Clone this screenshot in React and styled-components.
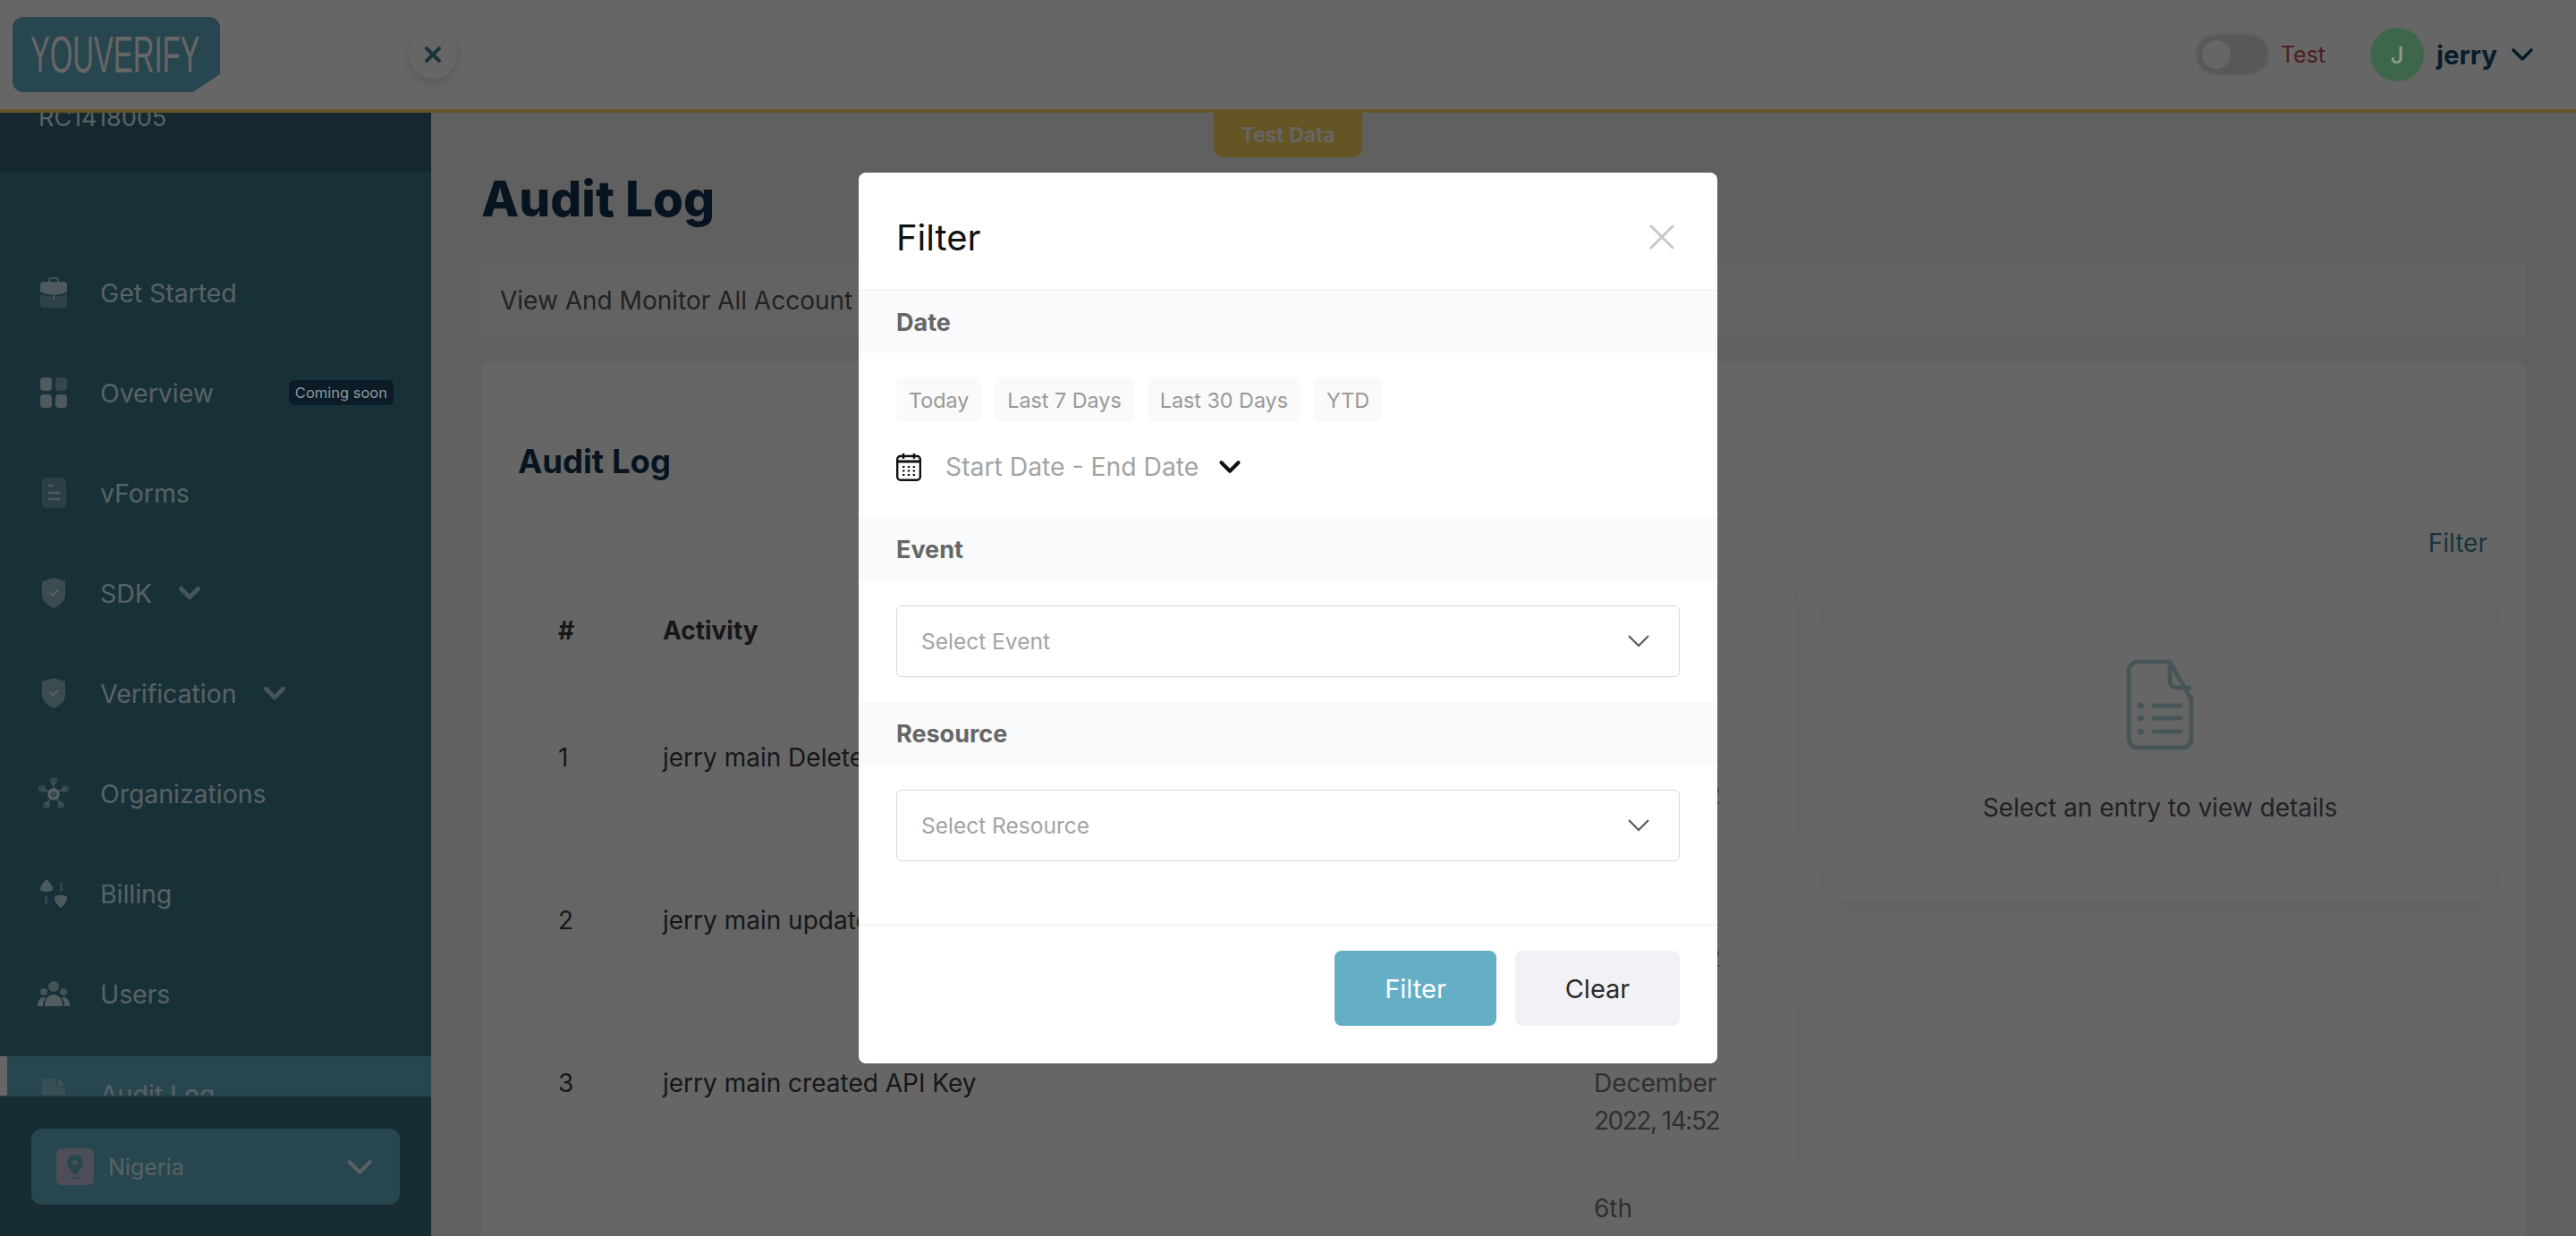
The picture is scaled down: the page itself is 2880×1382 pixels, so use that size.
import React from 'react';
import styled, { createGlobalStyle } from 'styled-components';
import { X, ChevronDown } from 'lucide-react';

const font = `Inter, "Liberation Sans", sans-serif`;

const GlobalStyle = createGlobalStyle`
  html, body { margin: 0; padding: 0; height: 100%; overflow: hidden; background: #f0f0f0; }
  body { font-family: ${font}; }
  * { box-sizing: border-box; }
`;

const Page = styled.div`
  position: relative;
  width: 2880px;
  height: 1382px;
  overflow: hidden;
  display: flex;
  flex-direction: column;
`;

/* top bar */
const TopBar = styled.header`
  position: relative;
  flex: none;
  height: 126px;
  display: flex;
  align-items: center;
  padding: 0 40px 0 14px;
  background: #fff;
  border-bottom: 4px solid #fdd45e;
`;
const Logo = styled.div`
  width: 232px;
  height: 84px;
  padding-left: 20px;
  display: flex;
  align-items: center;
  background: #65afc6;
  border-radius: 12px;
  clip-path: polygon(0 0, 100% 0, 100% 76%, 87% 100%, 0 100%);
  overflow: hidden;
`;
const LogoText = styled.span`
  display: inline-block;
  color: #fff;
  font-family: "Liberation Sans", sans-serif;
  font-size: 58px;
  line-height: 1;
  white-space: nowrap;
  transform: scaleX(0.565);
  transform-origin: left center;
`;
const SideToggle = styled.button`
  width: 54px;
  height: 54px;
  margin-left: 211px;
  border: 0;
  border-radius: 50%;
  padding: 0;
  display: flex;
  align-items: center;
  justify-content: center;
  background: #fff;
  color: #3f7f8f;
  box-shadow: 0 4px 12px rgba(0, 0, 0, 0.14);
`;
const TestTab = styled.div`
  position: absolute;
  left: 1357px;
  top: 126px;
  width: 166px;
  height: 50px;
  display: flex;
  align-items: center;
  justify-content: center;
  border-radius: 0 0 10px 10px;
  background: #fdd45e;
  color: #fff;
  font-size: 23px;
  font-weight: 600;
`;
const TopRight = styled.div`
  margin-left: auto;
  display: flex;
  align-items: center;
`;
const Switch = styled.div`
  width: 84px;
  height: 48px;
  padding: 5px;
  border: 3px solid #ededed;
  border-radius: 24px;
  background: #dcdcdc;
`;
const Knob = styled.div`
  width: 32px;
  height: 32px;
  border-radius: 50%;
  background: #fff;
`;
const TestLabel = styled.span`
  margin: 0 50px 0 12px;
  color: #c74a4a;
  font-size: 25px;
`;
const Avatar = styled.div`
  width: 60px;
  height: 60px;
  margin-right: 14px;
  border-radius: 50%;
  display: flex;
  align-items: center;
  justify-content: center;
  background: #9bffb8;
  font-size: 26px;
  font-weight: 500;
`;
/* this letter is brighter than the dimming layer lets anything be */
const AvatarLetter = styled.span`
  position: relative;
  z-index: 20;
  color: #8f9a90;
`;
const UserName = styled.span`
  margin-right: 8px;
  color: #18486b;
  font-size: 29.5px;
  font-weight: 700;
`;

/* sidebar */
const Body = styled.div`
  flex: 1;
  min-height: 0;
  display: flex;
`;
const Sidebar = styled.aside`
  flex: none;
  width: 482px;
  display: flex;
  flex-direction: column;
  background: #3d7a8c;
  color: #dcf5fa;
`;
const SideScroll = styled.div`
  flex: 1;
  min-height: 0;
  overflow: hidden;
`;
const OrgHead = styled.div`
  height: 67px;
  overflow: hidden;
  background: #376575;
`;
const OrgNumber = styled.div`
  margin: -11px 0 0 43px;
  font-size: 27px;
  line-height: 34px;
`;
const Nav = styled.nav`
  padding-top: 92px;
  display: flex;
  flex-direction: column;
  gap: 28px;
`;
const NavItem = styled.div`
  flex: none;
  position: relative;
  height: 84px;
  padding-left: 112px;
  display: flex;
  align-items: center;
  font-size: 28.4px;
  background: ${(p) => (p.$active ? '#65afc6' : 'transparent')};
  border-left: ${(p) => (p.$active ? '8px solid #fff' : '0')};
  ${(p) => p.$active && 'padding-left: 104px;'}
`;
const NavIcon = styled.span`
  position: absolute;
  left: ${(p) => (p.$active ? '34px' : '42px')};
  top: 24px;
  width: 36px;
  height: 36px;
  display: flex;
  align-items: center;
  justify-content: center;
`;
const NavChevron = styled(ChevronDown)`
  margin-left: 23px;
  opacity: 0.75;
`;
const SoonBadge = styled.span`
  position: relative;
  z-index: 20;
  margin-left: auto;
  margin-right: 42px;
  height: 28px;
  padding: 0 7px;
  display: flex;
  align-items: center;
  border-radius: 6px;
  background: #0b1c28;
  color: #8d979c;
  font-size: 16.5px;
`;
const SideFooter = styled.div`
  flex: none;
  height: 157px;
  padding: 35px 35px 0;
  border-top: 2px solid #5d8696;
  background: #3a7080;
`;
const CountrySelect = styled.div`
  height: 85px;
  padding: 0 22px 0 28px;
  display: flex;
  align-items: center;
  border-radius: 12px;
  background: #65afc6;
`;
const CountryIcon = styled.span`
  width: 42px;
  height: 41px;
  margin-right: 16px;
  display: flex;
  align-items: center;
  justify-content: center;
  border-radius: 6px;
  background: #c3c3e0;
`;
const CountryName = styled.span`
  font-size: 25px;
`;
const CountryChevron = styled(ChevronDown)`
  margin-left: auto;
`;

/* main content */
const Main = styled.main`
  flex: 1;
  min-width: 0;
  padding: 61px 56px 0;
  overflow: hidden;
  background: #f0f0f0;
`;
const PageTitle = styled.h1`
  margin: 0;
  color: #12334f;
  font-size: 55px;
  line-height: 70px;
  font-weight: 800;
`;
const SubCard = styled.div`
  height: 83px;
  margin-top: 37px;
  padding-left: 21px;
  display: flex;
  align-items: center;
  border-radius: 8px;
  background: #f8f8f8;
  color: #555;
  font-size: 28px;
`;
const Card = styled.section`
  margin-top: 29px;
  padding: 85px 43px 0 41px;
  min-height: 1000px;
  border-radius: 8px;
  background: #fff;
`;
const CardTitle = styled.h2`
  margin: 0;
  color: #12334f;
  font-size: 36.5px;
  line-height: 50px;
  font-weight: 700;
`;
const FilterLink = styled.div`
  margin-top: 46px;
  color: #3f7f8f;
  font-size: 28px;
  line-height: 40px;
  text-align: right;
`;
const Columns = styled.div`
  margin-top: 26px;
  margin-left: 1px;
  display: grid;
  grid-template-columns: 1426px 732px;
  column-gap: 43px;
  align-items: start;
`;
const Table = styled.div`
  box-shadow: 0 0 30px rgba(0, 0, 0, 0.025);
`;
const TableRow = styled.div`
  height: ${(p) => (p.$head ? '103px' : '182px')};
  padding-left: 44px;
  display: grid;
  grid-template-columns: 117px 1041px 1fr;
  align-items: center;
  color: #3a3a3a;
  font-size: 28px;
  font-weight: ${(p) => (p.$head ? 700 : 400)};
  background: ${(p) => (p.$alt ? '#fcfcfc' : 'transparent')};
`;
const DateCell = styled.div`
  color: #777;
  line-height: 42px;
`;
const DateLine = styled.div`
  white-space: nowrap;
  letter-spacing: ${(p) => (p.$digits ? '-1.5px' : '0')};
`;
const Details = styled.div`
  height: 355px;
  padding-top: 84px;
  display: flex;
  flex-direction: column;
  align-items: center;
  border-radius: 8px;
  background: #fff;
  box-shadow: 0 6px 30px rgba(60, 90, 90, 0.1);
  color: #555;
  font-size: 28px;
`;
const DetailsText = styled.div`
  margin-top: 47px;
`;

/* modal */
const Overlay = styled.div`
  position: absolute;
  inset: 0;
  z-index: 10;
  display: flex;
  justify-content: center;
  align-items: flex-start;
  padding-top: 193px;
  background: rgba(0, 0, 0, 0.6);
`;
const Modal = styled.div`
  width: 960px;
  height: 996px;
  border-radius: 8px;
  background: #fff;
  overflow: hidden;
`;
const ModalHead = styled.div`
  height: 132px;
  padding: 14px 38px 0 42px;
  display: flex;
  align-items: center;
  justify-content: space-between;
  border-bottom: 2px solid #f2f3f5;
`;
const ModalTitle = styled.h3`
  margin: 0;
  color: #111;
  font-size: 40px;
  font-weight: 400;
`;
const SectionLabel = styled.div`
  height: 70px;
  padding-left: 42px;
  display: flex;
  align-items: center;
  background: #f9fafb;
  color: #666;
  font-size: 27px;
  font-weight: 700;
`;
const DateBody = styled.div`
  height: 184px;
  padding: 27px 42px 0;
`;
const Chips = styled.div`
  display: flex;
  gap: 15px;
`;
const Chip = styled.span`
  height: 50px;
  padding: 0 14px;
  display: flex;
  align-items: center;
  border-radius: 6px;
  background: #fafafa;
  color: #999;
  font-size: 23.3px;
`;
const DateRange = styled.div`
  height: 40px;
  margin-top: 30px;
  display: flex;
  align-items: center;
  color: #a3a3a3;
  font-size: 28.3px;
`;
const DateText = styled.span`
  margin: 0 16px 0 27px;
`;
const SelectBody = styled.div`
  padding: 28px 42px ${(p) => (p.$last ? '70px' : '28px')};
`;
const Select = styled.div`
  height: 80px;
  padding: 0 33px 0 27px;
  display: flex;
  align-items: center;
  justify-content: space-between;
  border: 1px solid #d8d8dc;
  border-radius: 6px;
  color: #a3a3a3;
  font-size: 24.5px;
`;
const ModalFoot = styled.div`
  padding: 28px 42px 0;
  display: flex;
  justify-content: flex-end;
  gap: 21px;
  border-top: 2px solid #f2f2f7;
`;
const Button = styled.button`
  width: ${(p) => (p.$primary ? '181px' : '184px')};
  height: 84px;
  border: 0;
  border-radius: 8px;
  background: ${(p) => (p.$primary ? '#65afc6' : '#f1f2f6')};
  color: ${(p) => (p.$primary ? '#fff' : '#2b2b2b')};
  font-family: ${font};
  font-size: 29px;
`;

/* drawings */
const Briefcase = () => (
  <svg width="30" height="34" viewBox="0 0 30 34">
    <path d="M10 5V3.5A2.5 2.5 0 0 1 12.5 1h5A2.5 2.5 0 0 1 20 3.5V5" fill="none" stroke="currentColor" strokeWidth="2" opacity=".7" />
    <path d="M0 9a4 4 0 0 1 4-4h22a4 4 0 0 1 4 4v7c-8 5-22 5-30 0z" fill="currentColor" opacity=".85" />
    <path d="M0 18c8 5 22 5 30 0v12a4 4 0 0 1-4 4H4a4 4 0 0 1-4-4z" fill="currentColor" opacity=".35" />
    <rect x="14" y="20" width="2" height="5" rx="1" fill="currentColor" opacity=".8" />
  </svg>
);
const Tiles = () => (
  <svg width="30" height="34" viewBox="0 0 30 34" fill="currentColor">
    <rect width="13" height="15" rx="4" opacity=".85" />
    <rect x="17" width="13" height="15" rx="4" opacity=".45" />
    <rect y="19" width="13" height="15" rx="4" opacity=".85" />
    <rect x="17" y="19" width="13" height="15" rx="4" opacity=".85" />
  </svg>
);
const FormSheet = () => (
  <svg width="27" height="34" viewBox="0 0 27 34">
    <rect width="27" height="34" rx="5" fill="currentColor" opacity=".3" />
    <path d="M7 9h5M7 17h13M7 24h13" stroke="currentColor" strokeWidth="2.4" opacity=".8" />
  </svg>
);
const Shield = () => (
  <svg width="26" height="34" viewBox="0 0 26 34">
    <path d="M13 0l13 4v15c0 7-6 12-13 15C6 31 0 26 0 19V4z" fill="currentColor" opacity=".55" />
    <path d="M8.5 16l3.5 3.5 6-6" fill="none" stroke="currentColor" strokeWidth="2.2" />
  </svg>
);
const Hub = () => (
  <svg width="34" height="36" viewBox="0 0 34 36" fill="currentColor">
    <g opacity=".45">
      <circle cx="17" cy="4" r="4" />
      <circle cx="4" cy="13" r="4" />
      <circle cx="30" cy="13" r="4" />
      <circle cx="9" cy="31" r="4" />
      <circle cx="25" cy="31" r="4" />
    </g>
    <path d="M17 5v13M4 13l13 5M30 13l-13 5M9 31l8-13M25 31l-8-13" stroke="currentColor" strokeWidth="2" opacity=".6" />
    <circle cx="17" cy="19" r="5" fill="none" stroke="currentColor" strokeWidth="3.4" />
  </svg>
);
const Transfer = () => (
  <svg width="30" height="32" viewBox="0 0 30 32" fill="currentColor">
    <path d="M7 0c3 3 7 7 7 11 0 2-2 3-7 3s-7-1-7-3c0-4 4-8 7-11z" opacity=".85" />
    <path d="M23 32c-3-2-7-7-7-11 0-2 2-3 7-3s7 1 7 3c0 4-4 9-7 11z" opacity=".85" />
    <rect x="22" y="3" width="3" height="11" rx="1.5" opacity=".4" />
    <rect x="5" y="18" width="3" height="11" rx="1.5" opacity=".4" />
  </svg>
);
const People = () => (
  <svg width="36" height="28" viewBox="0 0 36 28" fill="currentColor">
    <circle cx="18" cy="6" r="6" opacity=".7" />
    <circle cx="7" cy="12" r="4" opacity=".7" />
    <circle cx="29" cy="12" r="4" opacity=".7" />
    <path d="M8 28c0-8 4-13 10-13s10 5 10 13z" opacity=".9" />
    <path d="M0 28c0-5 2-10 7-10 1 0 2 0 2 1-2 2-3 5-3 9zM36 28c0-5-2-10-7-10-1 0-2 0-2 1 2 2 3 5 3 9z" opacity=".9" />
  </svg>
);
const FoldedDoc = () => (
  <svg width="26" height="34" viewBox="0 0 26 34">
    <path d="M3 0h13v10h10v21a3 3 0 0 1-3 3H3a3 3 0 0 1-3-3V3a3 3 0 0 1 3-3z" fill="currentColor" opacity=".3" />
    <path d="M18 0l8 8h-8z" fill="currentColor" opacity=".55" />
  </svg>
);
const Pin = () => (
  <svg width="18" height="28" viewBox="0 0 18 28">
    <path d="M9 0a9 9 0 0 1 9 9c0 5-5 10-9 14C5 19 0 14 0 9a9 9 0 0 1 9-9z" fill="#65afc6" />
    <circle cx="9" cy="9" r="3" fill="#c3c3e0" />
    <ellipse cx="9" cy="26" rx="6" ry="1.6" fill="#65afc6" opacity=".7" />
  </svg>
);
const CalendarIcon = () => (
  <svg width="28" height="32" viewBox="0 0 28 32">
    <rect x="1.2" y="4" width="25.6" height="26.8" rx="3.5" fill="none" stroke="#111" strokeWidth="2.4" />
    <path d="M1 10h26" stroke="#111" strokeWidth="3" />
    <path d="M8 1v6M20 1v6" stroke="#111" strokeWidth="2.4" />
    <path d="M7 16h2.4M12.8 16h2.4M18.6 16h2.4M7 20.5h2.4M12.8 20.5h2.4M18.6 20.5h2.4M7 25h2.4M12.8 25h2.4M18.6 25h2.4" stroke="#111" strokeWidth="2" />
  </svg>
);
const ThinChevron = () => (
  <svg width="24" height="14" viewBox="0 0 24 14">
    <path d="M1 1l11 11L23 1" fill="none" stroke="#555" strokeWidth="2" />
  </svg>
);
const ListDoc = () => (
  <svg width="76" height="102" viewBox="0 0 76 102" fill="none" stroke="#b5d5dc" strokeWidth="5">
    <path d="M12 3h37l24 42v44a10 10 0 0 1-10 10H12A10 10 0 0 1 3 89V13A10 10 0 0 1 12 3z" />
    <path d="M49 3v21a8 8 0 0 0 8 8h16" />
    <path d="M31 52h30M31 66h30M31 81h30" strokeLinecap="round" strokeWidth="5" />
    <path d="M16 52h.5M16 66h.5M16 81h.5" strokeLinecap="round" strokeWidth="7" />
  </svg>
);

const navItems = [
  { label: 'Get Started', icon: <Briefcase /> },
  { label: 'Overview', icon: <Tiles />, soon: true },
  { label: 'vForms', icon: <FormSheet /> },
  { label: 'SDK', icon: <Shield />, more: true },
  { label: 'Verification', icon: <Shield />, more: true },
  { label: 'Organizations', icon: <Hub /> },
  { label: 'Billing', icon: <Transfer /> },
  { label: 'Users', icon: <People /> },
  { label: 'Audit Log', icon: <FoldedDoc />, active: true },
];

const rows = [
  { n: 1, activity: 'jerry main Deleted API Key' },
  { n: 2, activity: 'jerry main updated API Key' },
  { n: 3, activity: 'jerry main created API Key' },
  { n: 4, activity: '' },
];

const App = () => (
  <Page>
    <GlobalStyle />
    <TopBar>
      <Logo>
        <LogoText>YOUVERIFY</LogoText>
      </Logo>
      <SideToggle>
        <X size={28} strokeWidth={3.4} />
      </SideToggle>
      <TestTab>Test Data</TestTab>
      <TopRight>
        <Switch>
          <Knob />
        </Switch>
        <TestLabel>Test</TestLabel>
        <Avatar>
          <AvatarLetter>J</AvatarLetter>
        </Avatar>
        <UserName>jerry</UserName>
        <ChevronDown size={40} strokeWidth={2.2} color="#18486b" />
      </TopRight>
    </TopBar>
    <Body>
      <Sidebar>
        <SideScroll>
          <OrgHead>
            <OrgNumber>RC1418005</OrgNumber>
          </OrgHead>
          <Nav>
            {navItems.map((item) => (
              <NavItem key={item.label} $active={item.active}>
                <NavIcon $active={item.active}>{item.icon}</NavIcon>
                {item.label}
                {item.more && <NavChevron size={38} strokeWidth={3} />}
                {item.soon && <SoonBadge>Coming soon</SoonBadge>}
              </NavItem>
            ))}
          </Nav>
        </SideScroll>
        <SideFooter>
          <CountrySelect>
            <CountryIcon>
              <Pin />
            </CountryIcon>
            <CountryName>Nigeria</CountryName>
            <CountryChevron size={46} strokeWidth={2.1} />
          </CountrySelect>
        </SideFooter>
      </Sidebar>
      <Main>
        <PageTitle>Audit Log</PageTitle>
        <SubCard>View And Monitor All Account Activities</SubCard>
        <Card>
          <CardTitle>Audit Log</CardTitle>
          <FilterLink>Filter</FilterLink>
          <Columns>
            <Table>
              <TableRow $head>
                <span>#</span>
                <span>Activity</span>
                <span>Date</span>
              </TableRow>
              {rows.map((row) => (
                <TableRow key={row.n} $alt={row.n % 2 === 0}>
                  <span>{row.activity && row.n}</span>
                  <span>{row.activity}</span>
                  <DateCell>
                    <DateLine>6th</DateLine>
                    <DateLine>December</DateLine>
                    <DateLine $digits>2022, 14:52</DateLine>
                  </DateCell>
                </TableRow>
              ))}
            </Table>
            <Details>
              <ListDoc />
              <DetailsText>Select an entry to view details</DetailsText>
            </Details>
          </Columns>
        </Card>
      </Main>
    </Body>
    <Overlay>
      <Modal>
        <ModalHead>
          <ModalTitle>Filter</ModalTitle>
          <X size={48} strokeWidth={1.5} color="#c8c8c8" />
        </ModalHead>
        <SectionLabel>Date</SectionLabel>
        <DateBody>
          <Chips>
            <Chip>Today</Chip>
            <Chip>Last 7 Days</Chip>
            <Chip>Last 30 Days</Chip>
            <Chip>YTD</Chip>
          </Chips>
          <DateRange>
            <CalendarIcon />
            <DateText>Start Date - End Date</DateText>
            <ChevronDown size={38} strokeWidth={2.6} color="#111" />
          </DateRange>
        </DateBody>
        <SectionLabel>Event</SectionLabel>
        <SelectBody>
          <Select>
            Select Event
            <ThinChevron />
          </Select>
        </SelectBody>
        <SectionLabel>Resource</SectionLabel>
        <SelectBody $last>
          <Select>
            Select Resource
            <ThinChevron />
          </Select>
        </SelectBody>
        <ModalFoot>
          <Button $primary>Filter</Button>
          <Button>Clear</Button>
        </ModalFoot>
      </Modal>
    </Overlay>
  </Page>
);

export default App;
